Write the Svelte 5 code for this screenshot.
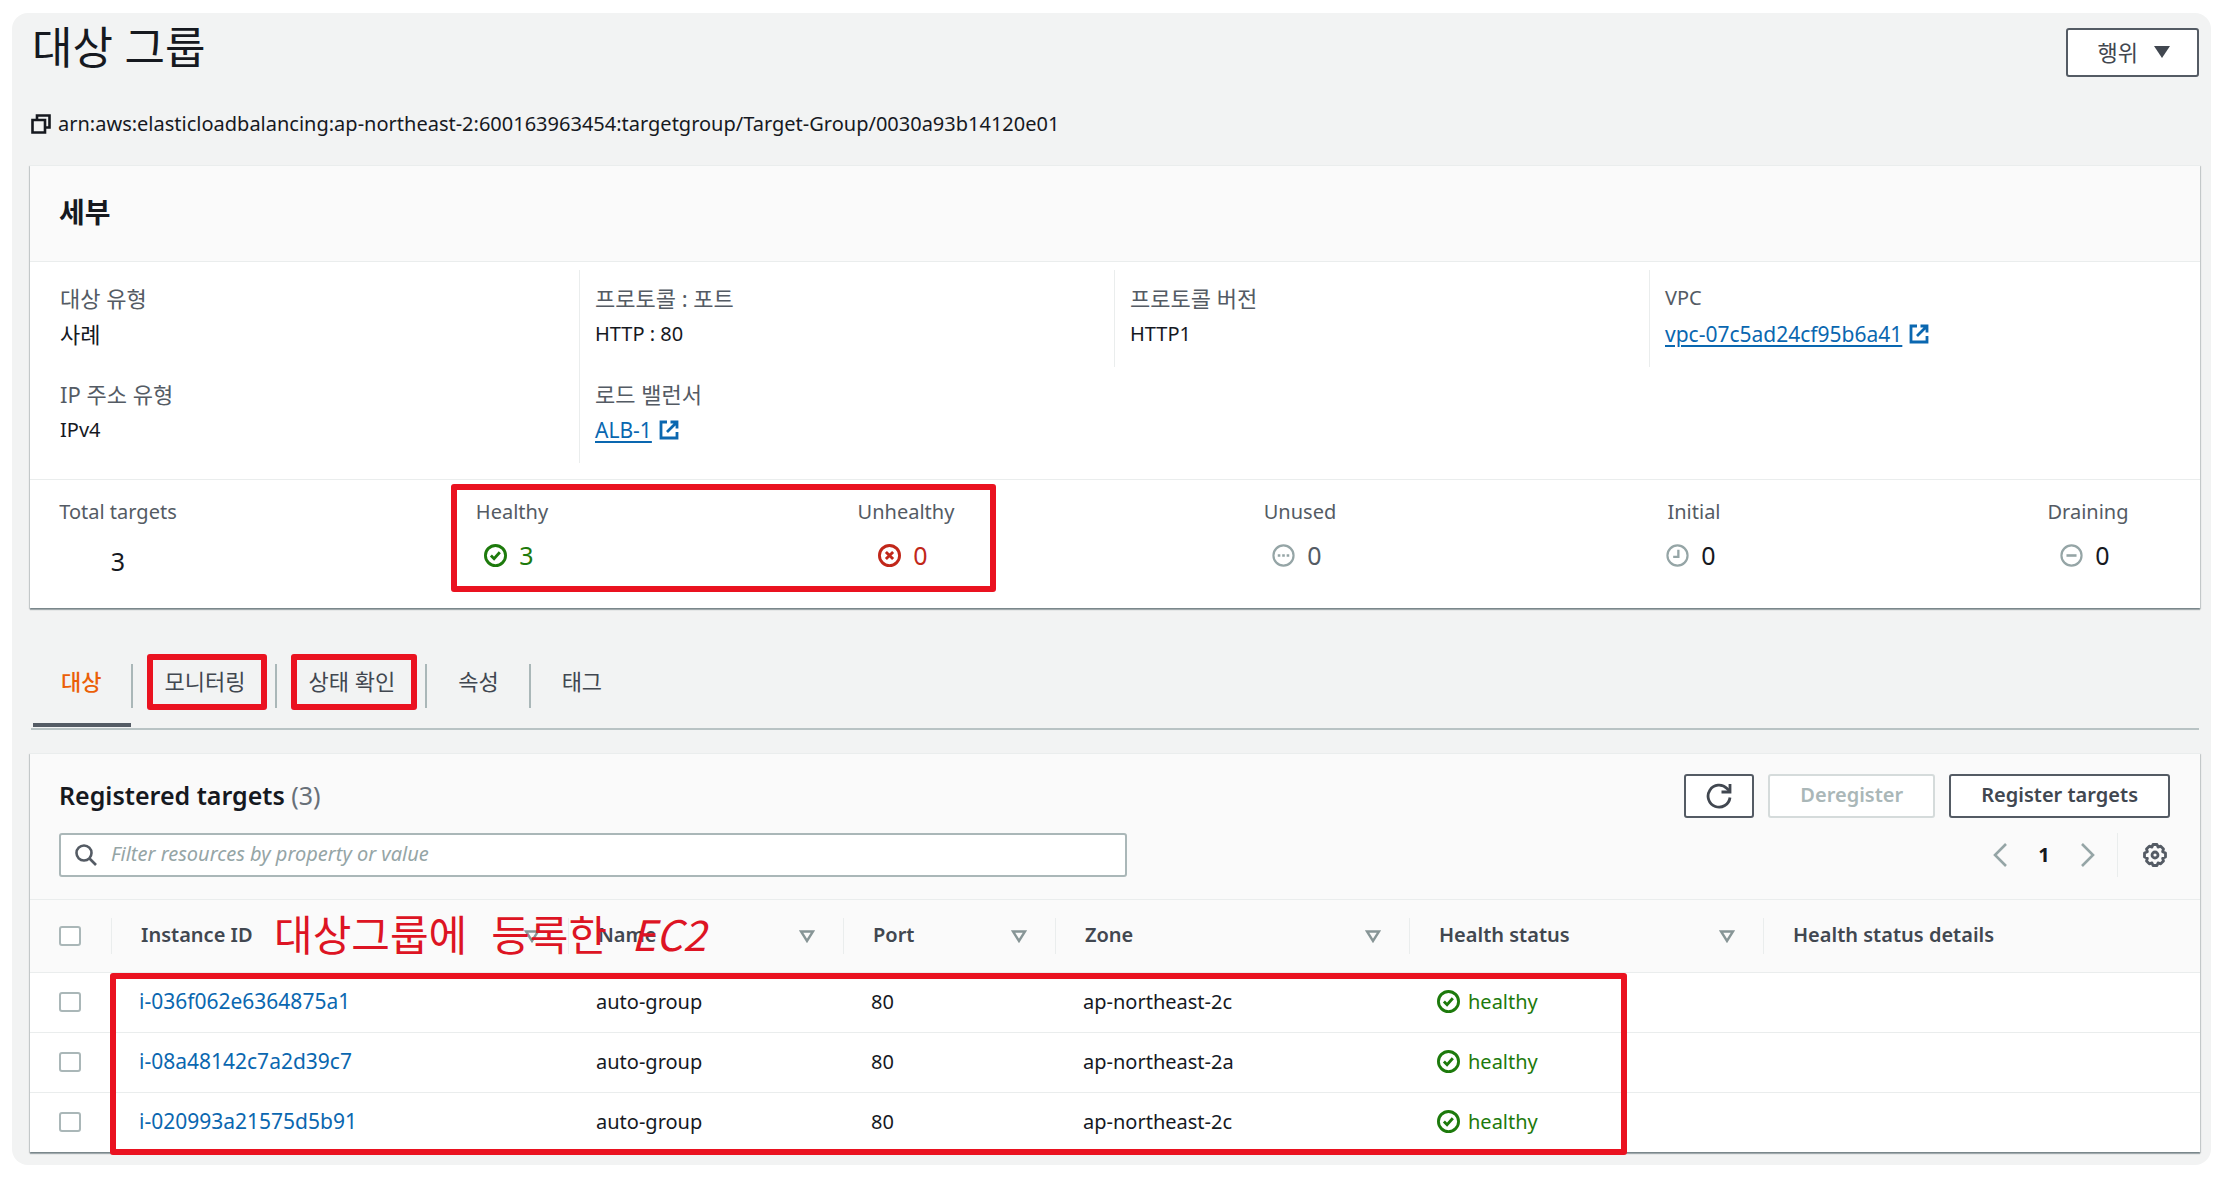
<script>
  const details = [
    [
      { label: '대상 유형', value: '사례' },
      { label: 'IP 주소 유형', value: 'IPv4' }
    ],
    [
      { label: '프로토콜 : 포트', value: 'HTTP : 80' },
      { label: '로드 밸런서', value: 'ALB-1', link: true }
    ],
    [{ label: '프로토콜 버전', value: 'HTTP1' }],
    [{ label: 'VPC', value: 'vpc-07c5ad24cf95b6a41', link: true }]
  ];

  const stats = [
    { label: 'Total targets', value: 3, kind: 'total' },
    { label: 'Healthy', value: 3, kind: 'healthy' },
    { label: 'Unhealthy', value: 0, kind: 'unhealthy' },
    { label: 'Unused', value: 0, kind: 'unused' },
    { label: 'Initial', value: 0, kind: 'initial' },
    { label: 'Draining', value: 0, kind: 'draining' }
  ];

  const tabs = [
    { label: '대상', active: true },
    { label: '모니터링', marked: true },
    { label: '상태 확인', marked: true },
    { label: '속성' },
    { label: '태그' }
  ];

  const columns = [
    { label: 'Instance ID', sortable: true },
    { label: 'Name', sortable: true },
    { label: 'Port', sortable: true },
    { label: 'Zone', sortable: true },
    { label: 'Health status', sortable: true },
    { label: 'Health status details' }
  ];

  const targets = [
    { id: 'i-036f062e6364875a1', name: 'auto-group', port: 80, zone: 'ap-northeast-2c' },
    { id: 'i-08a48142c7a2d39c7', name: 'auto-group', port: 80, zone: 'ap-northeast-2a' },
    { id: 'i-020993a21575d5b91', name: 'auto-group', port: 80, zone: 'ap-northeast-2c' }
  ];

  // Hangul is set slightly larger than Latin text.
  const isKorean = (text) => /[가-힣]/.test(text);
</script>

{#snippet statusIcon(kind)}
  <svg class="icon" viewBox="0 0 16 16" fill="none" stroke="currentColor" stroke-width="2" aria-hidden="true">
    <circle cx="8" cy="8" r="7" stroke-width={kind === 'healthy' || kind === 'unhealthy' ? 2 : 1.5} />
    {#if kind === 'healthy'}
      <path d="M4.8 8 7 10.2l4-4.4" />
    {:else if kind === 'unhealthy'}
      <path d="m5.5 5.5 5 5m0-5-5 5" />
    {:else if kind === 'unused'}
      <path d="M4 8h1.8M7.1 8h1.8M10.2 8H12" stroke-width="1.8" />
    {:else if kind === 'initial'}
      <path d="M8.6 4v5H5" stroke-width="1.6" />
    {:else}
      <path d="M4.5 8h7" stroke-width="1.8" />
    {/if}
  </svg>
{/snippet}

<main class="page">
  <header class="top">
    <h1>대상 그룹</h1>
    <button class="btn actions" type="button">
      행위
      <svg class="caret" viewBox="0 0 16 12" aria-hidden="true"><path d="M0 0h16L8 12z" fill="currentColor" /></svg>
    </button>
  </header>

  <div class="arn">
    <button class="plain" type="button" aria-label="ARN 복사">
      <svg class="copy" viewBox="0 0 20 20" fill="none" stroke="currentColor" stroke-width="2.6" aria-hidden="true">
        <path d="M1.5 6h12.5v12.500h-12.500z" />
        <path d="M6 6V1.500h12.500v12H14" />
      </svg>
    </button>
    <span>arn:aws:elasticloadbalancing:ap-northeast-2:600163963454:targetgroup/Target-Group/0030a93b14120e01</span>
  </div>

  <section class="card">
    <div class="card-title"><h2>세부</h2></div>
    <div class="details">
      {#each details as column}
        <dl>
          {#each column as item}
            <div class="pair">
              <dt class:ko={isKorean(item.label)}>{item.label}</dt>
              <dd class:ko={isKorean(item.value)}>
                {#if item.link}
                  <a class="external" href="#top"
                    ><span>{item.value}</span>
                    <svg class="ext" viewBox="0 0 20 20" fill="none" stroke="currentColor" stroke-width="2.8" aria-hidden="true">
                      <path d="M8 2H2v16h16v-6" />
                      <path d="M11.5 2H18v6.5M18 2 8 12" />
                    </svg></a
                  >
                {:else}{item.value}{/if}
              </dd>
            </div>
          {/each}
        </dl>
      {/each}
    </div>
    <div class="stats">
      {#each stats as stat}
        <div class="stat {stat.kind}">
          <div class="stat-label">{stat.label}</div>
          <div class="stat-value">
            {#if stat.kind !== 'total'}{@render statusIcon(stat.kind)}{/if}
            <span>{stat.value}</span>
          </div>
        </div>
      {/each}
      <div class="mark stats-mark"></div>
    </div>
  </section>

  <nav class="tabs">
    {#each tabs as tab}
      <button class="tab" class:active={tab.active} class:marked={tab.marked} type="button">{tab.label}</button>
    {/each}
  </nav>

  <section class="card">
    <div class="tools">
      <div class="row">
        <h2 class="table-title">Registered targets <span class="count">(3)</span></h2>
        <div class="buttons">
          <button class="btn refresh" type="button" aria-label="Refresh">
            <svg viewBox="0 0 26 26" fill="none" stroke="currentColor" stroke-width="2.8" aria-hidden="true">
              <path d="M24 14.5A11 11 0 1 1 21 5.5L23.5 8" />
              <path d="M24 1v8h-8.5" />
            </svg>
          </button>
          <button class="btn" type="button" disabled>Deregister</button>
          <button class="btn" type="button">Register targets</button>
        </div>
      </div>
      <div class="row">
        <label class="search">
          <svg viewBox="0 0 22 22" fill="none" stroke="currentColor" stroke-width="2.6" aria-hidden="true">
            <circle cx="9" cy="9" r="7.5" />
            <path d="m14.5 14.5 6.5 6.5" />
          </svg>
          <input type="text" aria-label="Filter" placeholder="Filter resources by property or value" />
        </label>
        <div class="pager">
          <button class="plain arrow" type="button" aria-label="Previous page">
            <svg viewBox="0 0 14 24" fill="none" stroke="currentColor" stroke-width="2.6" aria-hidden="true"><path d="M13 1 2 12l11 11" /></svg>
          </button>
          <span class="current">1</span>
          <button class="plain arrow" type="button" aria-label="Next page">
            <svg viewBox="0 0 14 24" fill="none" stroke="currentColor" stroke-width="2.6" aria-hidden="true"><path d="m1 1 11 11L1 23" /></svg>
          </button>
          <div class="settings">
            <button class="plain gear" type="button" aria-label="Settings">
              <svg viewBox="0 0 24 24" fill="none" stroke="currentColor" stroke-width="2.8" stroke-linejoin="round" aria-hidden="true">
                <path d="M10 1.5h4l1 2.6 2.7-.9 2.8 2.8-.9 2.7 2.9 1.3v4l-2.9 1.3.9 2.7-2.8 2.8-2.7-.9-1 2.6h-4l-1-2.6-2.7.9L3.5 18l.9-2.7L1.5 14v-4l2.9-1.3L3.5 6l2.8-2.8 2.7.9z" />
                <circle cx="12" cy="12" r="3" />
              </svg>
            </button>
          </div>
        </div>
      </div>
    </div>

    <div class="table-wrap">
      <table>
        <colgroup>
          <col class="c-check" /><col class="c-id" /><col class="c-name" /><col class="c-port" /><col class="c-wide" /><col class="c-wide" /><col />
        </colgroup>
        <thead>
          <tr>
            <th class="check"><input type="checkbox" aria-label="Select all" /></th>
            {#each columns as column}
              <th>
                <div class="head">
                  <span>{column.label}</span>
                  {#if column.sortable}
                    <svg class="sort" viewBox="0 0 16 13" fill="none" stroke="currentColor" stroke-width="2.4" aria-hidden="true"><path d="M2 1.5h12L8 11z" /></svg>
                  {/if}
                </div>
              </th>
            {/each}
          </tr>
        </thead>
        <tbody>
          {#each targets as target}
            <tr>
              <td class="check"><input type="checkbox" aria-label={target.id} /></td>
              <td><a href="#top">{target.id}</a></td>
              <td>{target.name}</td>
              <td>{target.port}</td>
              <td>{target.zone}</td>
              <td><span class="state">{@render statusIcon('healthy')}healthy</span></td>
              <td></td>
            </tr>
          {/each}
        </tbody>
      </table>
      <p class="note"><span>대상그룹에</span><span>등록한</span><em>EC2</em></p>
      <div class="mark table-mark"></div>
    </div>
  </section>
</main>

<style>
  :global(body) {
    background: #fff;
  }
  .page {
    box-sizing: border-box;
    margin: 13px 9px 13px 12px;
    padding: 15px 11px 13px 18px;
    border-radius: 16px;
    background: #f2f3f3;
    color: #16191f;
    font-family: 'Noto Sans', 'Noto Sans CJK KR', sans-serif;
    font-size: 20px;
    line-height: 28px;
  }
  h1,
  h2,
  p,
  dl,
  dd {
    margin: 0;
  }
  a {
    color: #0a67b0;
    font-size: 21px;
    text-decoration: none;
  }
  .top {
    display: flex;
    justify-content: space-between;
    align-items: flex-start;
    padding-right: 1px;
  }
  h1 {
    padding-left: 2px;
    font-size: 44px;
    font-weight: 400;
    line-height: 38px;
  }
  .btn {
    box-sizing: border-box;
    height: 44px;
    padding: 0 30px 2px;
    border: 2px solid #545b64;
    border-radius: 3px;
    background: #fff;
    color: #414750;
    font-family: inherit;
    font-size: 20px;
    font-weight: 600;
    line-height: 28px;
  }
  .btn:disabled {
    border-color: #d5dbdb;
    color: #aab7b8;
  }
  .actions {
    display: flex;
    align-items: center;
    gap: 16px;
    height: 49px;
    padding: 0 27px 2px 30px;
    font-size: 22px;
    font-weight: 400;
  }
  .caret {
    width: 16px;
    height: 12px;
  }
  .plain {
    display: flex;
    padding: 0;
    border: 0;
    background: none;
    color: inherit;
  }
  .arn {
    display: flex;
    align-items: center;
    gap: 7px;
    margin: 33px 0 27px 1px;
  }
  .copy {
    width: 20px;
    height: 20px;
  }
  .card {
    border-top: 1px solid #eaeded;
    background: #fff;
    box-shadow:
      0 2px 1px rgba(0, 28, 36, 0.3),
      1px 1px 1px rgba(0, 28, 36, 0.15),
      -1px 1px 1px rgba(0, 28, 36, 0.15);
  }
  .card-title {
    display: flex;
    align-items: center;
    box-sizing: border-box;
    height: 96px;
    padding: 0 29px 3px;
    border-bottom: 1px solid #eaeded;
    background: #fafafa;
  }
  h2 {
    font-size: 28px;
    font-weight: 600;
    line-height: 36px;
  }
  .table-title {
    padding-bottom: 2px;
    font-size: 25px;
  }
  .details {
    display: grid;
    grid-template-columns: repeat(4, 1fr);
    align-items: start;
    padding: 8px 16px 16px 14px;
    border-bottom: 1px solid #eaeded;
  }
  dl {
    display: flex;
    flex-direction: column;
    gap: 24px;
    padding: 10px 15px 15px;
    border-left: 1px solid #eaeded;
  }
  dl:first-child {
    border-left-color: transparent;
  }
  .pair {
    line-height: 36px;
  }
  dt {
    color: #545b64;
  }
  .ko {
    font-size: 22px;
  }
  .external {
    display: inline-flex;
    align-items: center;
    gap: 7px;
    vertical-align: top;
  }
  .external span {
    text-decoration: underline;
    text-underline-offset: 3px;
  }
  .ext {
    width: 20px;
    height: 20px;
  }
  .stats {
    position: relative;
    display: flex;
    justify-content: space-between;
    padding: 13px 52px 16px 28px;
  }
  .stat {
    width: 120px;
    text-align: center;
    white-space: nowrap;
  }
  .stat-label {
    color: #545b64;
    line-height: 37px;
  }
  .stat-value {
    display: flex;
    align-items: center;
    justify-content: center;
    gap: 12px;
    height: 50px;
    padding-right: 6px;
    font-size: 25px;
  }
  .total .stat-value {
    height: 62px;
    padding-right: 0;
  }
  .icon {
    width: 23px;
    height: 23px;
  }
  .healthy .stat-value,
  .state {
    color: #1d7a0c;
  }
  .unhealthy .stat-value {
    color: #c1271a;
  }
  .unused .stat-value {
    color: #545b64;
  }
  .unused .icon,
  .initial .icon,
  .draining .icon {
    color: #95a5a6;
  }
  .mark,
  .marked::after {
    position: absolute;
    box-sizing: border-box;
    border: 6px solid #ea1220;
    border-radius: 3px;
    pointer-events: none;
  }
  .stats-mark {
    top: 4px;
    bottom: 16px;
    left: 19.4%;
    width: 25.1%;
  }
  .tabs {
    display: flex;
    margin: 56px 1px 23px;
    padding-bottom: 20px;
    border-bottom: 2px solid #b9c3c4;
  }
  .tab {
    position: relative;
    height: 44px;
    padding: 0 30px 10px 31px;
    border: 0;
    border-right: 2px solid #aab7b8;
    background: none;
    color: #414750;
    font-family: inherit;
    font-size: 22px;
    font-weight: 400;
    line-height: 32px;
  }
  .tab:last-child {
    border-right: 0;
  }
  .active {
    padding-left: 30px;
    color: #eb5f07;
    font-weight: 500;
  }
  .active::after {
    content: '';
    position: absolute;
    right: 0;
    bottom: -19px;
    left: 2px;
    height: 4px;
    background: #545b64;
  }
  .marked::after {
    content: '';
    top: -10px;
    right: 8px;
    bottom: -2px;
    left: 14px;
  }
  .tools {
    display: flex;
    flex-direction: column;
    gap: 15px;
    padding: 20px 30px 22px 29px;
    border-bottom: 1px solid #eaeded;
    background: #fafafa;
  }
  .row {
    display: flex;
    align-items: center;
    justify-content: space-between;
    height: 44px;
  }
  .count {
    color: #687078;
    font-weight: 400;
  }
  .buttons {
    display: flex;
    gap: 14px;
  }
  .refresh {
    display: flex;
    align-items: center;
    padding: 0 20px;
  }
  .refresh svg {
    width: 26px;
    height: 26px;
  }
  .search {
    box-sizing: border-box;
    display: flex;
    align-items: center;
    gap: 14px;
    width: 50.6%;
    height: 44px;
    padding: 0 14px;
    border: 2px solid #aab7b8;
    border-radius: 3px;
    background: #fff;
    color: #545b64;
  }
  .search svg {
    width: 22px;
    height: 22px;
  }
  .search input {
    flex: 1;
    padding: 0 0 2px;
    border: 0;
    outline: 0;
    background: none;
    font-family: inherit;
    font-size: 20px;
    line-height: 28px;
  }
  .search input::placeholder {
    color: #95a5a6;
    font-style: italic;
  }
  .pager {
    display: flex;
    align-items: center;
  }
  .arrow {
    color: #95a5a6;
  }
  .arrow svg {
    width: 14px;
    height: 24px;
  }
  .current {
    width: 74px;
    font-weight: 700;
    text-align: center;
  }
  .settings {
    display: flex;
    align-items: center;
    height: 44px;
    margin-left: 22px;
    padding: 0 3px 0 25px;
    border-left: 1px solid #eaeded;
    color: #545b64;
  }
  .gear svg {
    width: 24px;
    height: 24px;
  }
  .table-wrap {
    position: relative;
  }
  table {
    width: 100%;
    border-collapse: separate;
    border-spacing: 0;
    table-layout: fixed;
  }
  .c-check {
    width: 81px;
  }
  .c-id {
    width: 457px;
  }
  .c-name {
    width: 275px;
  }
  .c-port {
    width: 212px;
  }
  .c-wide {
    width: 354px;
  }
  th {
    height: 72px;
    padding: 0;
    border-bottom: 1px solid #eaeded;
    background: #fafafa;
    color: #414750;
    font-weight: 600;
    text-align: left;
  }
  .head {
    display: flex;
    align-items: center;
    justify-content: space-between;
    height: 36px;
    padding: 0 28px 0 29px;
    border-left: 1px solid #eaeded;
  }
  .head span {
    padding-bottom: 2px;
  }
  .sort {
    width: 16px;
    height: 13px;
    color: #879596;
  }
  td {
    height: 57px;
    padding: 0 28px 2px;
    border-bottom: 1px solid #eaeded;
  }
  tbody tr:last-child td {
    border-bottom: 0;
  }
  .check {
    padding: 0 0 0 29px;
  }
  td.check {
    padding-bottom: 2px;
  }
  .check input {
    display: block;
    box-sizing: border-box;
    width: 22px;
    height: 20px;
    margin: 0;
    border: 2px solid #aab7b8;
    border-radius: 3px;
    background: #fff;
    appearance: none;
  }
  .state {
    display: flex;
    align-items: center;
    gap: 8px;
  }
  .note {
    position: absolute;
    top: 3px;
    left: 244px;
    display: flex;
    gap: 24px;
    color: #dd1423;
    font-family: 'Noto Sans CJK KR', sans-serif;
    font-size: 42px;
    line-height: 60px;
    white-space: nowrap;
  }
  .table-mark {
    top: 73px;
    bottom: -3px;
    left: 80px;
    width: 1517px;
  }
</style>
